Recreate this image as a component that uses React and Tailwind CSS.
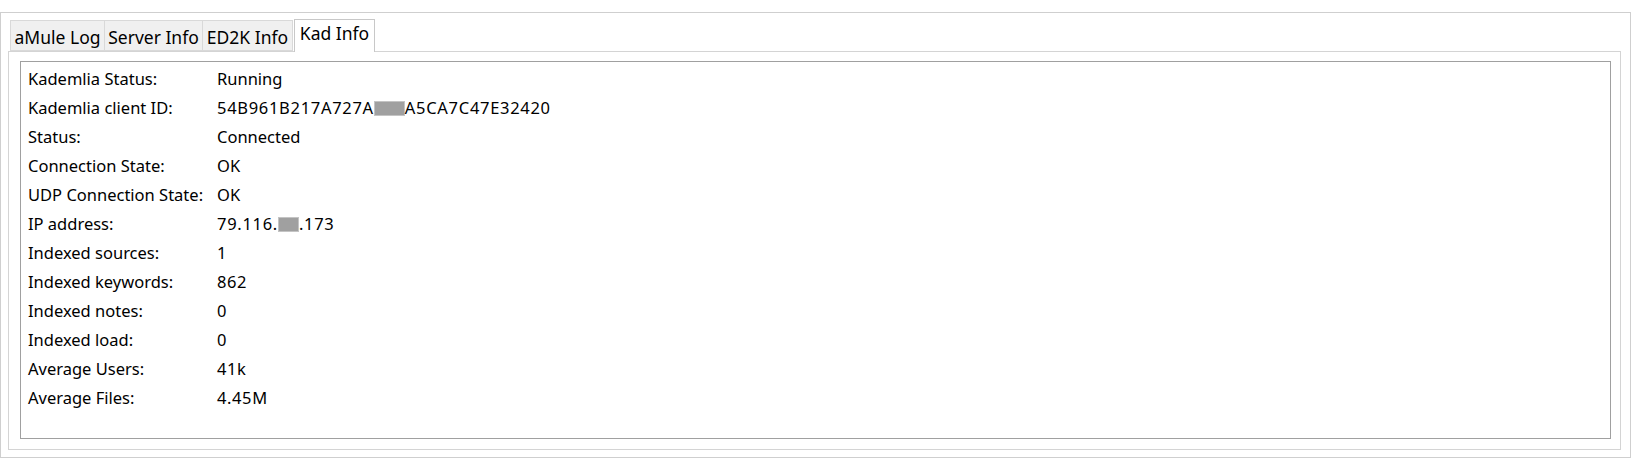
const rows = [
  ['Kademlia Status:', 'Running'],
  ['Kademlia client ID:', <span className="tracking-[0.7px]">54B961B217A727A<Redacted w="w-[31px]" />A5CA7C47E32420</span>],
  ['Status:', 'Connected'],
  ['Connection State:', 'OK'],
  ['UDP Connection State:', 'OK'],
  ['IP address:', <span className="tracking-[0.7px]">79.116.<Redacted w="w-[21px]" />.173</span>],
  ['Indexed sources:', <span className="tracking-[0.6px]">1</span>],
  ['Indexed keywords:', <span className="tracking-[0.6px]">862</span>],
  ['Indexed notes:', '0'],
  ['Indexed load:', '0'],
  ['Average Users:', <span className="tracking-[0.6px]">41k</span>],
  ['Average Files:', <span className="tracking-[0.6px]">4.45M</span>],
];

function Redacted({ w }) {
  return <span className={`inline-block ${w} h-[15px] align-[-2px] bg-[#a0a0a0] border border-[#c4c4c4]`} />;
}

const tabs = [
  { name: 'aMule Log', w: 'w-[95px]' },
  { name: 'Server Info', w: 'w-[99px] -ml-px' },
  { name: 'ED2K Info', w: 'w-[91px] -ml-px' },
  { name: 'Kad Info', w: 'w-[81px] ml-px', active: true },
];

export default function App() {
  return (
    <div className="w-[1631px] h-[459px] bg-white pt-[12px] text-black" style={{ fontFamily: '"Noto Sans", "Open Sans", sans-serif' }}>
      <div className="h-[446px] border border-[#cfcfcf] pl-[7px] pr-[9px] pt-[6px] pb-[7px] flex flex-col">
        <div className="flex items-end pl-[2px] h-[32px] relative z-10">
          {tabs.map(t =>
            t.active ? (
              <div key={t.name} className={`${t.w} h-[33px] -mb-px bg-white border border-b-0 border-[#c8c8c8] text-[17.5px] leading-[22px] pt-[2px] text-center`}>
                {t.name}
              </div>
            ) : (
              <div key={t.name} className={`${t.w} h-[31px] bg-[#f0f0f0] border border-[#d9d9d9] text-[17.5px] leading-[22px] pt-[5px] text-center`}>
                {t.name}
              </div>
            )
          )}
        </div>
        <div className="flex-1 border border-[#d4d4d4] pl-[11px] pr-[9px] pt-[9px] pb-[10px] flex">
          <div className="flex-1 border border-[#a0a0a0] pl-[7px] pt-[2px] text-[16.5px] leading-[29px]">
            {rows.map(([k, v], i) => (
              <div key={i} className="flex">
                <div className="w-[189px] shrink-0">{k}</div>
                <div>{v}</div>
              </div>
            ))}
          </div>
        </div>
      </div>
    </div>
  );
}
